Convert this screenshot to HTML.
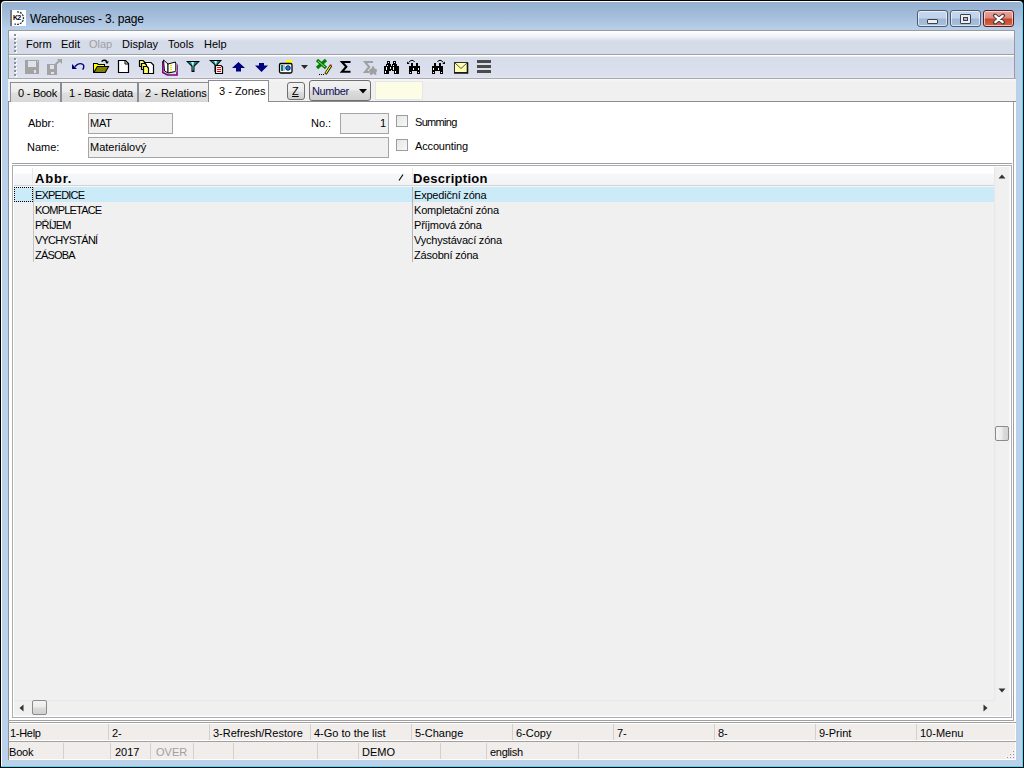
<!DOCTYPE html>
<html><head><meta charset="utf-8">
<style>
*{margin:0;padding:0;box-sizing:border-box}
html,body{width:1024px;height:768px;overflow:hidden;background:#000}
body{position:relative;font-family:"Liberation Sans",sans-serif;font-size:11px;color:#000}
.a{position:absolute}
.t{position:absolute;white-space:nowrap;line-height:13px}
#win{left:0;top:0;width:1024px;height:768px;background:#000;border-radius:5px 5px 0 0}
#frame{left:1px;top:1px;width:1022px;height:766px;border-radius:4px 4px 0 0;background:#fff;border-right:1px solid #3ce0ff;border-bottom:1px solid #3ce0ff}
#blue{left:2px;top:2px;width:1020px;height:764px;border-radius:3px 3px 0 0;background:linear-gradient(#94b0d0 0px,#a4bddb 14px,#b7cfe8 27px,#b9d1ea 40px)}
#content{left:8px;top:101px;width:1008px;height:659px;background:#fff;border-left:1px solid #8a8f9b}
#mbox{left:8px;top:30px;width:1007px;height:49px;border:1px solid #9a9a9a;background:#fff}
.wb{top:10px;width:31px;height:17px;border:1px solid #4c5b72;border-radius:3px;box-shadow:inset 0 0 0 1px rgba(255,255,255,.6);background:linear-gradient(#c5d7ee 0,#c0d3eb 7px,#9db7d5 8px,#a9c2df 16px)}
.wb.cl{border-color:#5a1a22;background:linear-gradient(#e8a59a 0,#dd8a7c 7px,#c8452c 8px,#d36a4c 16px)}
#menu{left:9px;top:31px;width:1005px;height:23px;background:linear-gradient(#ffffff 0,#eef0f7 6px,#d6dbe9 10px,#d6dbe9 23px)}
#menusep{left:9px;top:54px;width:1005px;height:1px;background:#a0a0a0}
#tb{left:9px;top:55px;width:1005px;height:23px;background:linear-gradient(#ffffff 0,#ffffff 1px,#d7dcea 2px,#dce0ed 20px,#e2e5f0 23px)}
#tbsep{left:9px;top:78px;width:1007px;height:1px;background:#a8aab0}
#tabstrip{left:8px;top:79px;width:1008px;height:23px;background:linear-gradient(#f8f8f8 0,#f0f0f0 3px);border-bottom:1px solid #898c95}
.tab{top:82px;height:20px;border:1px solid #898c95;border-bottom:none;background:linear-gradient(#f2f2f2 0,#ececec 9px,#dedede 10px,#d8d8d8 19px)}
.tab .t{top:4px;letter-spacing:-0.25px}
.fld{background:#f0f0f0;border:1px solid #a5a5a5}
.chk{width:12px;height:12px;border:1px solid #9c9c9c;background:linear-gradient(135deg,#e6e6e6,#f8f8f8)}
.lab .t{}
</style></head>
<body>
<div id="win" class="a"></div>
<div id="frame" class="a"></div>
<div id="blue" class="a"></div>
<div id="content" class="a"></div>
<div id="mbox" class="a"></div>

<!-- title -->
<div class="a" style="left:10px;top:10px;width:16px;height:16px;background:#fff;border-left:2px solid #777"></div>
<svg class="a" style="left:10px;top:10px" width="16" height="16"><path d="M7 1.8 A6.3 6.3 0 1 1 4.5 13.8" stroke="#333" stroke-width="1.3" stroke-dasharray="2 1" fill="none"/></svg>
<div class="t" style="left:13px;top:13px;font-size:7px;font-weight:bold;letter-spacing:-0.8px;line-height:9px">K2</div>
<div class="t" style="left:30px;top:12px;font-size:12px;line-height:15px;color:#000;letter-spacing:-0.2px">Warehouses - 3. page</div>
<div class="a wb" style="left:917px"><div class="a" style="left:9px;top:8px;width:11px;height:5px;border:1px solid #3a4254;border-radius:1px;background:#eee"></div></div>
<div class="a wb" style="left:950px"><div class="a" style="left:9px;top:3px;width:11px;height:10px;border:1px solid #3a4254;border-radius:1px;background:#eee"><div class="a" style="left:2px;top:2px;width:5px;height:4px;border:1px solid #3a4254;background:#9fb8d6"></div></div></div>
<div class="a wb cl" style="left:983px"><svg class="a" style="left:8px;top:2px" width="14" height="12" viewBox="0 0 14 12"><path d="M3 2.5 L11 9.5 M11 2.5 L3 9.5" stroke="#3a3a46" stroke-width="4" stroke-linecap="round"/><path d="M3.3 2.8 L10.7 9.2 M10.7 2.8 L3.3 9.2" stroke="#fff" stroke-width="2.2" stroke-linecap="round"/></svg></div>

<!-- menu -->
<div id="menu" class="a"></div>
<div id="menusep" class="a"></div>
<div id="tb" class="a"></div>
<div id="tbsep" class="a"></div>
<div class="t" style="left:26px;top:38px">Form</div>
<div class="t" style="left:61px;top:38px">Edit</div>
<div class="t" style="left:89px;top:38px;color:#a0a0a0">Olap</div>
<div class="t" style="left:122px;top:38px">Display</div>
<div class="t" style="left:168px;top:38px">Tools</div>
<div class="t" style="left:204px;top:38px">Help</div>
<svg class="a" style="left:0;top:30px" width="30" height="50" viewBox="0 30 30 50" shape-rendering="crispEdges">
<g fill="#fff"><rect x="15" y="35" width="2" height="2"/><rect x="15" y="39" width="2" height="2"/><rect x="15" y="43" width="2" height="2"/><rect x="15" y="47" width="2" height="2"/><rect x="15" y="51" width="2" height="2"/><rect x="15" y="59" width="2" height="2"/><rect x="15" y="63" width="2" height="2"/><rect x="15" y="67" width="2" height="2"/><rect x="15" y="71" width="2" height="2"/><rect x="15" y="75" width="2" height="2"/></g><g fill="#8a8e98"><rect x="14" y="34" width="2" height="2"/><rect x="14" y="38" width="2" height="2"/><rect x="14" y="42" width="2" height="2"/><rect x="14" y="46" width="2" height="2"/><rect x="14" y="50" width="2" height="2"/><rect x="14" y="58" width="2" height="2"/><rect x="14" y="62" width="2" height="2"/><rect x="14" y="66" width="2" height="2"/><rect x="14" y="70" width="2" height="2"/><rect x="14" y="74" width="2" height="2"/></g>
</svg>

<!-- toolbar icons -->
<svg class="a" style="left:0;top:56px" width="520" height="22" viewBox="0 56 520 22">
<g shape-rendering="crispEdges">
<!-- save -->
<rect x="25" y="60" width="14" height="14" fill="#a3a3a3"/>
<rect x="28" y="61" width="8" height="6" fill="#dfe2ec"/>
<rect x="37" y="61" width="1" height="1" fill="#dfe2ec"/>
<rect x="34" y="70" width="2" height="3" fill="#dfe2ec"/>
<!-- save as -->
<rect x="47" y="64" width="10" height="11" fill="#a3a3a3"/>
<rect x="50" y="65" width="4" height="4" fill="#dfe2ec"/>
<rect x="51" y="72" width="3" height="2" fill="#dfe2ec"/>
</g>
<path d="M55.5 64.5 L60 60" stroke="#a3a3a3" stroke-width="2"/>
<path d="M57 59 H62 V64 Z" fill="#a3a3a3"/>
<!-- undo -->
<path d="M72 64 L77 69 L72 69 Z" fill="#000080"/>
<path d="M75 66.5 Q77.5 63.6 80 63.6 Q83.8 63.6 83.8 66.5 Q83.8 68.5 82.5 69.5" stroke="#000080" stroke-width="1.4" fill="none"/>
<!-- open folder -->
<path d="M93 63 H97.5 L98.5 64 H105 V66 H109.5 L105.5 73 H93 Z" fill="#000"/>
<path d="M94 64 H97 L98 65 H104 V66 H97 L94 71 Z" fill="#ffff00"/>
<path d="M97.5 67 H107.7 L104.8 72 H94.8 Z" fill="#808000"/>
<path d="M101.5 61.5 Q104.5 59 107 61.5" stroke="#000" stroke-width="1.2" fill="none"/>
<path d="M105 61.5 H109 L107 64 Z" fill="#000"/>
<!-- new -->
<path d="M118.5 60.5 H125.5 L128.5 63.5 V72.5 H118.5 Z" fill="#fff" stroke="#000" stroke-width="1.2"/>
<path d="M125 61 V64 H128" stroke="#000" stroke-width="1" fill="none"/>
<!-- copy -->
<path d="M145.5 62.5 H151 L153.5 65 V73.5 H145.5 Z" fill="#fff" stroke="#000" stroke-width="1.2"/>
<path d="M139.5 60.5 H143 L144.5 62 V66.5 H139.5 Z" fill="#ffff60" stroke="#000" stroke-width="1.2"/>
<path d="M141.5 63.5 H145 L146.5 65 V69.5 H141.5 Z" fill="#ffff60" stroke="#000" stroke-width="1.2"/>
<path d="M143.5 66.5 H147 L148.5 68 V73.5 H143.5 Z" fill="#ffff60" stroke="#000" stroke-width="1.2"/>
<!-- book -->
<path d="M162.8 61 V72.5 L167.5 75 H177 V64.5" stroke="#800080" stroke-width="1.6" fill="none"/>
<path d="M163.5 60 L168 64 V73 L164.5 71 Z" fill="#fff" stroke="#000" stroke-width="1"/>
<path d="M168 64 L175.5 62 V71.5 L168 73 Z" fill="#fff" stroke="#000" stroke-width="1"/>
<rect x="175.5" y="63" width="1.5" height="9" fill="#909090"/>
<g fill="#e0e000" shape-rendering="crispEdges"><rect x="170" y="65" width="2" height="1"/><rect x="170" y="67" width="2" height="1"/><rect x="170" y="69" width="2" height="1"/><rect x="170" y="71" width="2" height="1"/></g>
<!-- filter -->
<path d="M186 61 H200 L194.5 66.5 V72 H191.5 V66.5 Z" fill="#000"/>
<path d="M188 62 H198 L193.5 66 V71 H192.5 V66 Z" fill="#009090"/>
<path d="M191 62 H194 L193.2 66 V70 H192.8 V66 Z" fill="#e8eef2"/>
<!-- filter red -->
<path d="M209 60 H222 L217.5 65 V72 H214.5 V65 Z" fill="#000"/>
<path d="M211 61 H220 L216.5 64.5 V71 H215.5 V64.5 Z" fill="#009090"/>
<path d="M214 61 H217 L216.2 64.5 V70 H215.8 V64.5 Z" fill="#e8eef2"/>
<path d="M215.5 65.5 H221 L222.5 67 V73.5 H215.5 Z" fill="#fff" stroke="#000" stroke-width="1.2"/>
<g stroke="#ff0000" stroke-width="1"><path d="M217 67.5 H221 M217 69.5 H221 M217 71.5 H221"/></g>
<!-- up / down -->
<path d="M238.5 62 L245 68 H241 V71.5 H236 V68 H232 Z" fill="#000080"/>
<path d="M259 63 H264 V65.5 H268 L261.5 72 L255 65.5 H259 Z" fill="#000080"/>
<!-- camera -->
<rect x="286" y="60" width="6" height="4" fill="#ffff00"/>
<rect x="279.5" y="63.5" width="12.5" height="9.5" rx="1.5" fill="#fff" stroke="#000" stroke-width="1.3"/>
<rect x="281" y="65" width="2" height="6" fill="#008080"/>
<rect x="283" y="65" width="2" height="6" fill="#c0c0c0"/>
<circle cx="288" cy="68" r="2.3" fill="#0080ff" stroke="#000" stroke-width="0.8"/>
<path d="M301 65 H308 L304.5 69 Z" fill="#2a2a2a"/>
<!-- excel -->
<path d="M317 60 L326 68 M326 60 L317 68" stroke="#008000" stroke-width="3.2"/>
<path d="M318 61 L325 67" stroke="#c8e8c8" stroke-width="0.8"/>
<path d="M325.5 74 L331 65.5" stroke="#000" stroke-width="2.6"/>
<path d="M325.8 73.3 L330.6 66" stroke="#ffff00" stroke-width="1.2"/>
<rect x="330" y="64.5" width="1.5" height="1.5" fill="#c00000"/>
<g fill="#000"><rect x="319" y="74" width="1" height="1"/><rect x="321" y="74" width="1" height="1"/><rect x="323" y="74" width="1" height="1"/></g>
<!-- sigma -->
<path d="M350.5 62 H342 L346.3 66.8 L342 71.8 H350.5" fill="none" stroke="#000" stroke-width="2.1"/>
<path d="M373 62 H365 L369.2 67 L365 72 H369" fill="none" stroke="#a0a0a0" stroke-width="2"/>
<path d="M372.5 66 L374 66.5 L374.5 68.5 L376.5 69 L377 71 L376 72.5 L376.5 74.5 L375 75 L373.5 73.5 L371.5 75 L370 74.5 L369.5 72.5 L369 70.5 L370 69 L371.5 68.5 Z" fill="#a0a0a0"/>
<!-- binoculars -->
<g shape-rendering="crispEdges"><rect x="387" y="61" width="3" height="3" fill="#000"/><rect x="393" y="61" width="3" height="3" fill="#000"/><rect x="386" y="64" width="5" height="2" fill="#000"/><rect x="392" y="64" width="5" height="2" fill="#000"/><rect x="384" y="66" width="15" height="4" fill="#000"/><rect x="384" y="70" width="7" height="1" fill="#000"/><rect x="392" y="70" width="7" height="1" fill="#000"/><rect x="384" y="71" width="5" height="3" fill="#000"/><rect x="394" y="71" width="5" height="3" fill="#000"/><rect x="388" y="62" width="1" height="1" fill="#fff"/><rect x="394" y="62" width="1" height="1" fill="#fff"/><rect x="387" y="65" width="1" height="1" fill="#fff"/><rect x="393" y="65" width="1" height="1" fill="#fff"/><rect x="386" y="67" width="1" height="3" fill="#fff"/><rect x="393" y="67" width="1" height="3" fill="#fff"/><rect x="390" y="67" width="1" height="2" fill="#fff"/><rect x="385" y="71" width="1" height="2" fill="#fff"/><rect x="395" y="71" width="1" height="2" fill="#fff"/><rect x="411" y="63" width="2" height="3" fill="#000"/><rect x="416" y="63" width="2" height="3" fill="#000"/><rect x="409" y="66" width="11" height="5" fill="#000"/><rect x="409" y="71" width="3" height="3" fill="#000"/><rect x="417" y="71" width="3" height="3" fill="#000"/><rect x="413" y="68" width="1" height="2" fill="#fff"/><rect x="418" y="68" width="1" height="2" fill="#fff"/><rect x="410" y="72" width="1" height="1" fill="#fff"/><rect x="418" y="72" width="1" height="1" fill="#fff"/><rect x="434" y="63" width="2" height="3" fill="#000"/><rect x="439" y="63" width="2" height="3" fill="#000"/><rect x="432" y="66" width="11" height="5" fill="#000"/><rect x="432" y="71" width="3" height="3" fill="#000"/><rect x="440" y="71" width="3" height="3" fill="#000"/><rect x="433" y="68" width="1" height="2" fill="#fff"/><rect x="438" y="68" width="1" height="2" fill="#fff"/><rect x="433" y="72" width="1" height="1" fill="#fff"/><rect x="441" y="72" width="1" height="1" fill="#fff"/></g>
<path d="M408.8 62.5 Q410 60.3 412 60.3 Q413.8 60.3 414.5 62" stroke="#000" stroke-width="1" fill="none"/><path d="M407 61.5 L407 64 L409.8 64 Z" fill="#000"/>
<path d="M437.5 62 Q438.2 60.3 440 60.3 Q442 60.3 443.2 62.5" stroke="#000" stroke-width="1" fill="none"/><path d="M445 61.5 L445 64 L442.2 64 Z" fill="#000"/>
<!-- mail -->
<rect x="454.5" y="62.5" width="13" height="10" fill="#ffffb0" stroke="#333" stroke-width="1"/>
<path d="M467.5 62.5 V73 H454" stroke="#111" stroke-width="1.6" fill="none"/>
<path d="M455 63 L461 68.5 L467 63" stroke="#555" stroke-width="1" fill="none"/>
<!-- menu bars -->
<g fill="#4a4a4a"><rect x="477" y="60" width="14" height="3"/><rect x="477" y="65" width="14" height="3"/><rect x="477" y="70" width="14" height="3"/></g>
</svg>

<!-- tabs -->
<div id="tabstrip" class="a"></div>
<div class="a tab" style="left:10px;width:51px"><div class="t" style="left:7px">0 - Book</div></div>
<div class="a tab" style="left:61px;width:77px"><div class="t" style="left:7px">1 - Basic data</div></div>
<div class="a tab" style="left:138px;width:71px"><div class="t" style="left:6px;letter-spacing:0">2 - Relations</div></div>
<div class="a" style="left:208px;top:80px;width:61px;height:22px;background:#fff;border:1px solid #898c95;border-bottom:none"><div class="t" style="left:10px;top:4px">3 - Zones</div></div>
<div class="a" style="left:287px;top:82px;width:18px;height:18px;border:1px solid #707070;border-radius:3px;background:linear-gradient(#f2f2f2 0,#ebebeb 8px,#dddddd 9px,#cfcfcf 16px)"><div class="t" style="left:4px;top:2px;text-decoration:underline">Z</div></div>
<div class="a" style="left:309px;top:80px;width:62px;height:21px;border:1px solid #707070;border-radius:3px;background:linear-gradient(#f2f2f2 0,#ebebeb 9px,#dddddd 10px,#cfcfcf 19px)"><div class="t" style="left:2px;top:4px;color:#10105a;letter-spacing:-0.4px">Number</div><svg class="a" style="left:49px;top:8px" width="8" height="5"><path d="M0 0 H8 L4 4.5 Z" fill="#000"/></svg></div>
<div class="a" style="left:375px;top:81px;width:48px;height:19px;background:#fdfde6;border:1px solid #e4e6ee"></div>

<!-- form -->
<div class="t" style="left:28px;top:117px">Abbr:</div>
<div class="a fld" style="left:88px;top:113px;width:85px;height:21px"><div class="t" style="left:1px;top:3px;letter-spacing:-0.2px">MAT</div></div>
<div class="t" style="left:311px;top:117px">No.:</div>
<div class="a fld" style="left:340px;top:113px;width:49px;height:21px"><div class="t" style="right:2px;top:3px">1</div></div>
<div class="a chk" style="left:396px;top:115px"></div>
<div class="t" style="left:415px;top:116px;letter-spacing:-0.7px">Summing</div>
<div class="t" style="left:27px;top:141px">Name:</div>
<div class="a fld" style="left:88px;top:137px;width:301px;height:21px"><div class="t" style="left:1px;top:3px">Materiálový</div></div>
<div class="a chk" style="left:396px;top:139px"></div>
<div class="t" style="left:415px;top:140px;letter-spacing:-0.15px">Accounting</div>

<!-- grid -->
<div class="a" style="left:12px;top:163px;width:1000px;height:1px;background:#a0a0a0"></div>
<div class="a" style="left:12px;top:165px;width:1000px;height:553px;border:1px solid #aaadb5;background:#fff"></div>
<div class="a" style="left:14px;top:167px;width:980px;height:19px;background:linear-gradient(#fff 0,#fff 6px,#f7f8fa 7px,#f1f2f4 18px);border-bottom:1px solid #d5d5d5"></div>
<div class="a" style="left:32px;top:168px;width:1px;height:17px;background:#e8e8e8"></div>
<div class="a" style="left:412px;top:168px;width:1px;height:17px;background:#e8e8e8"></div>
<div class="t" style="left:35px;top:171px;font-size:13px;font-weight:bold;line-height:15px;letter-spacing:0.8px">Abbr.</div>
<div class="t" style="left:413px;top:171px;font-size:13px;font-weight:bold;line-height:15px;letter-spacing:0.3px">Description</div>
<svg class="a" style="left:397px;top:173px" width="8" height="9"><path d="M2 7.5 L6 1.5" stroke="#000" stroke-width="1.1"/></svg>
<div class="a" style="left:14px;top:186px;width:980px;height:514px;background:#f0f0f0"></div>
<div class="a" style="left:34px;top:187px;width:960px;height:15px;background:#cbebf8"></div>
<div class="a" style="left:14px;top:187px;width:19px;height:15px;background:#cbebf8;border:1px dotted #000"></div>
<div class="a" style="left:14px;top:186px;width:980px;height:1px;background:#f6f6f6"></div><div class="a" style="left:33px;top:187px;width:1px;height:75px;background:#c4c4c4"></div>
<div class="a" style="left:412px;top:187px;width:1px;height:75px;background:#b4b4b4"></div>
<div class="t" style="left:35px;top:189px;letter-spacing:-0.8px">EXPEDICE</div>
<div class="t" style="left:35px;top:204px;letter-spacing:-0.8px">KOMPLETACE</div>
<div class="t" style="left:35px;top:219px;letter-spacing:-0.8px">PŘÍJEM</div>
<div class="t" style="left:35px;top:234px;letter-spacing:-0.8px">VYCHYSTÁNÍ</div>
<div class="t" style="left:35px;top:249px;letter-spacing:-0.8px">ZÁSOBA</div>
<div class="t" style="left:414px;top:189px;letter-spacing:-0.2px">Expediční zóna</div>
<div class="t" style="left:414px;top:204px;letter-spacing:-0.2px">Kompletační zóna</div>
<div class="t" style="left:414px;top:219px;letter-spacing:-0.2px">Příjmová zóna</div>
<div class="t" style="left:414px;top:234px;letter-spacing:-0.2px">Vychystávací zóna</div>
<div class="t" style="left:414px;top:249px;letter-spacing:-0.2px">Zásobní zóna</div>
<!-- v scrollbar -->
<div class="a" style="left:994px;top:167px;width:16px;height:533px;background:linear-gradient(90deg,#e6e6e6 0,#f0f0f0 2px,#f0f0f0 14px,#f4f4f4 16px)"></div>
<svg class="a" style="left:994px;top:167px" width="16" height="533"><path d="M4.5 11.5 L8 7.5 L11.5 11.5 Z" fill="#333"/><path d="M4.5 521.5 L8 525.5 L11.5 521.5 Z" fill="#333"/></svg>
<div class="a" style="left:995px;top:426px;width:14px;height:15px;border:1px solid #8b8b8b;border-radius:2px;background:linear-gradient(90deg,#f4f4f4 0,#ececec 6px,#dcdcdc 7px,#d0d0d0 13px)"></div>
<!-- h scrollbar -->
<div class="a" style="left:14px;top:700px;width:980px;height:16px;background:linear-gradient(#e6e6e6 0,#f0f0f0 2px,#f0f0f0 14px,#f4f4f4 16px)"></div>
<div class="a" style="left:994px;top:700px;width:16px;height:16px;background:#f0f0f0"></div>
<svg class="a" style="left:13px;top:700px" width="981" height="16"><path d="M10.5 4.5 L6.5 8 L10.5 11.5 Z" fill="#333"/><path d="M970.5 4.5 L974.5 8 L970.5 11.5 Z" fill="#333"/></svg>
<div class="a" style="left:32px;top:700px;width:15px;height:15px;border:1px solid #8b8b8b;border-radius:2px;background:linear-gradient(#f4f4f4 0,#ececec 6px,#dcdcdc 7px,#d0d0d0 13px)"></div>
<!-- outer content lines -->
<div class="a" style="left:1013px;top:102px;width:1px;height:619px;background:#a0a0a0"></div>
<div class="a" style="left:8px;top:720px;width:1006px;height:1px;background:#a0a0a0"></div>
<!-- function keys -->
<div class="a" style="left:8px;top:722px;width:1008px;height:1px;background:#a0a0a0"></div>
<div class="a" style="left:9px;top:723px;width:1007px;height:18px;background:#f0edeb;border-top:1px solid #fff;border-bottom:1px solid #fff;border-right:1px solid #fff"></div>
<div class="a" style="left:8px;top:741px;width:1008px;height:1px;background:#a0a0a0"></div>
<div class="a" style="left:9px;top:742px;width:1007px;height:18px;background:#f0edeb;border-bottom:1px solid #fff;border-right:1px solid #fff"></div>
<div class="t" style="left:10px;top:727px;letter-spacing:-0.3px">1-Help</div>
<div class="a" style="left:108px;top:724px;width:1px;height:16px;background:#d4d0cc"></div>
<div class="t" style="left:112px;top:727px">2-</div>
<div class="a" style="left:209px;top:724px;width:1px;height:16px;background:#d4d0cc"></div>
<div class="t" style="left:213px;top:727px">3-Refresh/Restore</div>
<div class="a" style="left:310px;top:724px;width:1px;height:16px;background:#d4d0cc"></div>
<div class="t" style="left:314px;top:727px">4-Go to the list</div>
<div class="a" style="left:411px;top:724px;width:1px;height:16px;background:#d4d0cc"></div>
<div class="t" style="left:415px;top:727px">5-Change</div>
<div class="a" style="left:512px;top:724px;width:1px;height:16px;background:#d4d0cc"></div>
<div class="t" style="left:516px;top:727px">6-Copy</div>
<div class="a" style="left:613px;top:724px;width:1px;height:16px;background:#d4d0cc"></div>
<div class="t" style="left:617px;top:727px">7-</div>
<div class="a" style="left:714px;top:724px;width:1px;height:16px;background:#d4d0cc"></div>
<div class="t" style="left:718px;top:727px">8-</div>
<div class="a" style="left:815px;top:724px;width:1px;height:16px;background:#d4d0cc"></div>
<div class="t" style="left:819px;top:727px">9-Print</div>
<div class="a" style="left:916px;top:724px;width:1px;height:16px;background:#d4d0cc"></div>
<div class="t" style="left:920px;top:727px">10-Menu</div>
<div class="a" style="left:63px;top:743px;width:1px;height:16px;background:#d4d0cc"></div>
<div class="a" style="left:110px;top:743px;width:1px;height:16px;background:#d4d0cc"></div>
<div class="a" style="left:150px;top:743px;width:1px;height:16px;background:#d4d0cc"></div>
<div class="a" style="left:193px;top:743px;width:1px;height:16px;background:#d4d0cc"></div>
<div class="a" style="left:233px;top:743px;width:1px;height:16px;background:#d4d0cc"></div>
<div class="a" style="left:317px;top:743px;width:1px;height:16px;background:#d4d0cc"></div>
<div class="a" style="left:358px;top:743px;width:1px;height:16px;background:#d4d0cc"></div>
<div class="a" style="left:440px;top:743px;width:1px;height:16px;background:#d4d0cc"></div>
<div class="a" style="left:486px;top:743px;width:1px;height:16px;background:#d4d0cc"></div>
<div class="a" style="left:578px;top:743px;width:1px;height:16px;background:#d4d0cc"></div>
<div class="t" style="left:9px;top:746px;letter-spacing:-0.2px">Book</div>
<div class="t" style="left:115px;top:746px">2017</div>
<div class="t" style="left:156px;top:746px;color:#a0a0a0">OVER</div>
<div class="t" style="left:362px;top:746px">DEMO</div>
<div class="t" style="left:490px;top:746px;letter-spacing:-0.3px">english</div>
<svg class="a" style="left:1000px;top:745px" width="16" height="15" shape-rendering="crispEdges"><g fill="#fff"><rect x="12" y="5" width="1" height="1"/><rect x="9" y="8" width="1" height="1"/><rect x="12" y="8" width="1" height="1"/><rect x="6" y="11" width="1" height="1"/><rect x="9" y="11" width="1" height="1"/><rect x="12" y="11" width="1" height="1"/></g><g fill="#909090"><rect x="13" y="6" width="1" height="1"/><rect x="10" y="9" width="1" height="1"/><rect x="13" y="9" width="1" height="1"/><rect x="7" y="12" width="1" height="1"/><rect x="10" y="12" width="1" height="1"/><rect x="13" y="12" width="1" height="1"/></g></svg>
</body></html>
